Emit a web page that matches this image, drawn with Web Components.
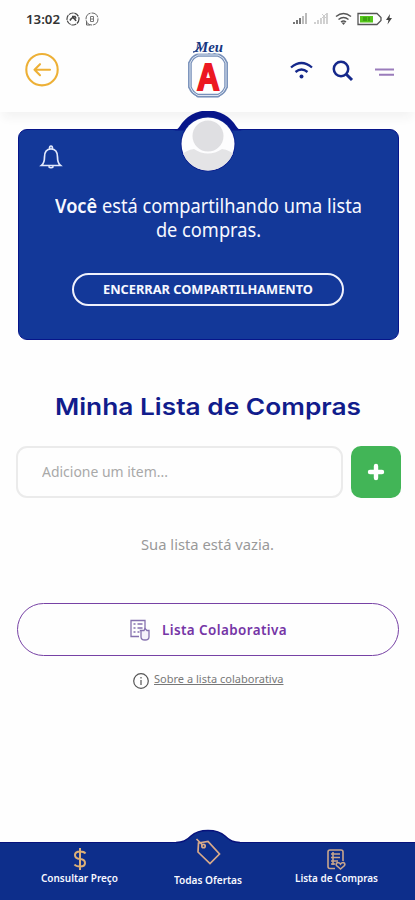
<!DOCTYPE html>
<html lang="pt-BR">
<head>
<meta charset="utf-8">
<title>Minha Lista de Compras</title>
<style>
html,body{margin:0;padding:0;background:#fefefe}
body{font-family:"Noto Sans","Open Sans",sans-serif}
</style>
</head>
<body>
<shopping-app></shopping-app>
<script>
const define = (name, html, ready) => customElements.define(name, class extends HTMLElement {
  connectedCallback() {
    if (this.shadowRoot) return;
    const t = document.createElement('template');
    t.innerHTML = html;
    this.attachShadow({mode: 'open'}).append(t.content.cloneNode(true));
    if (ready) ready(this);
  }
});

// Text condensed or widened to the width in its "w" attribute.
define('fit-text', `<style>
:host{display:block;white-space:nowrap;flex:none}
span{display:inline-block;vertical-align:top;transform-origin:0 50%;text-decoration:var(--line,none);text-underline-offset:1px}
</style><span><slot></slot></span>`, el => {
  const w = +el.getAttribute('w');
  el.style.width = w + 'px';
  const s = el.shadowRoot.querySelector('span');
  const fit = () => { s.style.transform = 'none'; s.style.transform = `scaleX(${w / s.getBoundingClientRect().width})`; };
  fit();
  document.fonts.ready.then(fit);
});

define('status-bar', `<style>
:host{display:flex;height:38px;box-sizing:border-box;padding:0 20px 0 26px;align-items:center;color:#333}
fit-text{font:600 12.5px/20px "Noto Sans",sans-serif;margin-top:1px}
.l{margin-left:6px}.r{margin-left:auto}
</style>
<fit-text w="34">13:02</fit-text>
<svg class="l" width="34" height="16" viewBox="0 0 34 16" fill="none" stroke="#444">
<circle cx="7" cy="8" r="6" stroke-width="1.2" stroke-dasharray="5 .8"/><path d="M4 9.500q2-3.500 3.500-2.500t2.500 3M6 5.500h3l1 2" stroke-width="1.600"/>
<circle cx="26" cy="8" r="6" stroke="#666" stroke-dasharray="8 1"/><path d="M20.500 10.500v3.500H24" stroke="#666"/><path d="M24.500 5.500h3v5h-3zM24.500 8h3" stroke="#777"/></svg>
<svg class="r" width="104" height="16" viewBox="0 0 104 16" fill="none">
<path d="M3 13v-2M6 13V9M9 13V7" stroke="#777" stroke-width="2"/><path d="M12 13V5M15 13V2" stroke="#bbb" stroke-width="2"/>
<path d="M24 13v-2M27 13V9M30 13V7M33 13V6M36 13V2" stroke="#ccc" stroke-width="1.800"/><path d="m31 3 4 4m0-4-4 4" stroke="#ccc"/>
<path d="M45 5.500q7.500-6 15 0M47.500 8.500q5-4 10 0M50 11q2.500-2 5 0" stroke="#555" stroke-width="1.500"/><path d="m52.500 14 2-2.500h-4z" fill="#555"/>
<path d="M67 2.500h19l4 4v3l-4 4H67z" stroke="#555" stroke-width="1.300"/>
<rect x="69" y="5" width="13" height="6.500" fill="#55c51b"/><path d="M73 6v4m2-4v4m3-4v4" stroke="#27820b"/>
<path d="m99 3-4 6h2.500l-1 4.500 4.500-6.500h-2.500z" fill="#444"/></svg>`);

define('brand-logo', `<style>:host{display:block;width:46px;height:62px}svg{display:block}
.m{font:italic 700 15px "Liberation Serif",serif}.a{font:700 37px "Liberation Sans",sans-serif}</style>
<svg width="46" height="62" viewBox="0 0 46 62">
<path d="M13 17h20q2 5 8 8v24q-6 3-8 8.500H13q-2-5.500-8-8.500V25q6-3 8-8z" fill="none" stroke="#8fa6c8" stroke-width="4" stroke-linejoin="round"/>
<path d="M13 17h20q6 2 8 8v24q-2 6-8 8.500H13q-6-2.500-8-8.500V25q2-6 8-8z" fill="#fefefe" stroke="#7890b9" stroke-width="3.500" stroke-linejoin="round"/>
<path d="M13 17h20q6 2 8 8v24q-2 6-8 8.500H13q-6-2.500-8-8.500V25q2-6 8-8z" fill="none" stroke="#dce5f1" stroke-width="1"/>
<text class="a" x="12" y="51.500" textLength="22.500" lengthAdjust="spacingAndGlyphs" fill="#ec1821" stroke="#ec1821" stroke-width="2">A</text>
<text class="m" x="10" y="14" textLength="28" lengthAdjust="spacingAndGlyphs" fill="#173782" stroke="#fefefe" stroke-width="3" paint-order="stroke">Meu</text>
<path d="M8 14q3 0 6-5" fill="none" stroke="#173782" stroke-width="1.300"/>
</svg>`);

define('app-header', `<style>
:host{display:grid;grid-template-columns:1fr 46px 1fr;height:74px;padding:0 20px 0 25px;background:#fefefe;box-shadow:0 9px 9px -3px #f3f3f3}
.back{margin-top:14px}.right{display:flex;align-items:center;margin:0 0 9px 0;justify-content:flex-end}
brand-logo{margin-left:-2.500px}
svg{display:block}
</style>
<svg class="back" width="34" height="36" viewBox="0 0 34 36" fill="none" stroke="#edb036" stroke-width="2.100" stroke-linecap="round" stroke-linejoin="round"><circle cx="17" cy="17.700" r="15.700"/><path d="M25 17.700H9.500m5.500-5.500-5.500 5.500 5.500 5.500"/></svg>
<brand-logo></brand-logo>
<div class="right"><svg width="106" height="24" viewBox="0 0 106 24" fill="none" stroke="#15288b" stroke-width="2.300">
<path d="M2 8.500Q12.500-.500 23 8.500M6.500 13Q12.500 8 18.500 13"/><circle cx="12.500" cy="17.500" r="2" fill="#15288b" stroke="none"/>
<circle cx="52" cy="10" r="7.200" stroke-width="2.500"/><path d="m57.500 15.500 5.500 5.500" stroke-width="3"/>
<path d="M86 10.500h19M90 15.800h15" stroke="#9a7cbb" stroke-width="2.100"/></svg></div>`);

define('share-card', `<style>
:host{display:block;position:relative;box-sizing:border-box;margin:17px 16.500px 0 17.500px;height:210.500px;border-radius:9px;background:#133899;border:1.500px solid #07158a;color:#f7f8ff}
.avatar{position:absolute;left:149px;top:-19px}
.bell{position:absolute;left:20px;top:14px}
.copy{display:flex;justify-content:center;padding:64px 0 0 .500px;font:400 19.500px/24px "Noto Sans",sans-serif;text-align:center}
b{font-weight:600}
.end{display:flex;align-items:center;justify-content:center;box-sizing:border-box;width:272px;height:33px;margin:30.500px 0 0 53px;border:2px solid #eff1fc;border-radius:17px;font:700 13px/24px "Noto Sans",sans-serif}
.end fit-text{margin-top:-1px}
svg{display:block}
</style>
<svg class="avatar" width="80" height="62" viewBox="0 0 80 62"><defs><clipPath id="c"><circle cx="40" cy="33" r="26.500"/></clipPath></defs>
<path d="M5 19.500Q9 19.500 12 15A33 33 0 0 1 68 15Q71 19.500 75 19.500z" fill="#07158a"/><circle cx="40" cy="33" r="27.500" fill="#0c218e"/><g clip-path="url(#c)"><rect width="80" height="62" fill="#fdfdfe"/><circle cx="40" cy="25" r="15.500" fill="#dfdfe2"/><path d="M12 62V46q5-7 14-8 14 9 28 0 9 1 14 8v16z" fill="#e4e4e6"/></g></svg>
<svg class="bell" width="24" height="27" viewBox="0 0 24 27" fill="none" stroke="#e3e9fc" stroke-width="1.700"><path d="M2.500 21.500Q5.500 19 5.500 13q0-8 6.500-8t6.500 8q0 6 3 8.500zM10.500 4.500Q10.500 2 12 2t1.500 2.500M9.500 22.500q2.500 2.500 5 0"/></svg>
<div class="copy"><fit-text w="307"><b>Você</b> está compartilhando uma lista<br>de compras.</fit-text></div>
<div class="end"><fit-text w="210">ENCERRAR COMPARTILHAMENTO</fit-text></div>`);

define('item-form', `<style>
:host{display:flex;gap:8px;margin:23.500px 14px 0 15.500px;height:52px}
.field{flex:1;box-sizing:border-box;border:2px solid #ebebeb;border-radius:11px;padding:11.500px 0 0 24.500px;font:400 15px/24px "Noto Sans",sans-serif;color:#a9a9a9}
.add{width:50px;border-radius:10px;background:#42b557;display:grid;place-items:center}
</style><div class="field"><fit-text w="126">Adicione um item...</fit-text></div>
<div class="add"><svg width="18" height="18" viewBox="0 0 18 18"><path d="M9 3v12M3 9h12" stroke="#fff" stroke-width="4.400" stroke-linecap="round"/></svg></div>`);

define('collab-button', `<style>
:host{display:flex;align-items:center;box-sizing:border-box;height:53px;margin:47px 16px 0 17px;border:1.800px solid #7742a5;border-radius:27px;padding-left:111px;color:#7535a6;font:600 13.500px/24px "Noto Sans",sans-serif;letter-spacing:.400px}
fit-text{margin-left:11px}
</style><svg width="22" height="22" viewBox="0 0 22 22" fill="none" stroke="#8570ae" stroke-width="1.300"><path d="M10 17.500H2V1.500h14v9"/><path d="M4.500 5h2m2 0h5M4.500 9h2m2 0h5M4.500 13h2m2 0h2" stroke-width="1.500"/><path d="M12 12.500v5.500q0 3 4 3t4-3v-6.500h-2l-2-2-1 2h-3.500z" fill="#f6f1fb"/></svg>
<fit-text w="125">Lista Colaborativa</fit-text>`);

define('about-link', `<style>
:host{display:flex;margin:14.500px 0 0 133px;height:20px;align-items:center;color:#777;font:400 11.500px/20px "Noto Sans",sans-serif}
fit-text{margin-left:5px;--line:underline;margin-top:-3px}
</style><svg width="16" height="18" viewBox="0 0 16 18" fill="none" stroke="#555"><circle cx="8" cy="9" r="7.300" stroke-width="1.200"/><path d="M8 8v5M8 5v1.600" stroke="#777" stroke-width="1.500"/></svg><fit-text w="129.500">Sobre a lista colaborativa</fit-text>`);

define('nav-item', `<style>
:host{display:flex;flex-direction:column;align-items:center;color:#f7f8ff;font:600 10.500px/14px "Noto Sans",sans-serif}
</style><slot name="icon"></slot><slot></slot>`);

define('bottom-nav', `<style>
:host{display:grid;grid-template-columns:159px 98px 158px;position:relative;height:58.500px;background:#0d2e8b;border-top:1.500px solid #07127c;box-sizing:border-box}
.bump{position:absolute;left:176px;top:-14px}
nav-item{padding-top:4px;position:relative}
nav-item.mid{padding-top:0;margin-top:-5.500px}
svg{display:block}
</style>
<svg class="bump" width="64" height="18" viewBox="0 0 64 18"><path d="M0 13.500Q9 13.500 15 7 21 1.500 32 1.500T49 7Q55 13.500 64 13.500v4.500H0z" fill="#0d2e8b"/><path d="M0 13.500Q9 13.500 15 7 21 1.500 32 1.500T49 7Q55 13.500 64 13.500" fill="none" stroke="#07127c" stroke-width="1.500"/></svg>
<nav-item><svg slot="icon" width="16" height="24" viewBox="0 0 16 24" fill="none" stroke="#deb176" stroke-width="2"><path d="M8 1v22M13.500 6.500Q12 4.500 8 4.500 3 4.500 3 8t5 4 5 4-5 3.500q-4 0-5.500-2"/></svg><fit-text w="77">Consultar Preço</fit-text></nav-item>
<nav-item class="mid"><svg slot="icon" width="28" height="36" viewBox="0 0 28 36" fill="none" stroke="#d9aa89" stroke-width="1.700"><path d="m4.500 6 9.500-1.500L25.500 17l-9.500 9.500L4 15zM2.500 2l6 6"/><circle cx="9.500" cy="9" r="1.700"/></svg><fit-text w="68">Todas Ofertas</fit-text></nav-item>
<nav-item><svg slot="icon" width="20" height="24" viewBox="0 0 20 24" fill="none" stroke="#c7a58c" stroke-width="1.600"><path d="M9 21.500H4q-2 0-2-2V5q0-2 2-2h11q2 0 2 2v9"/><path d="M5 7h9M5 10.500h9M5 14h7M5 17h4M7 5v13"/><path d="m14.500 22-4-3.500q-1-2 1-3 2 0 3 1.500 1-1.500 3-1.500 2 1 1 3z" fill="#0d2e8b"/></svg><fit-text w="83">Lista de Compras</fit-text></nav-item>`);

define('shopping-app', `<style>
:host{display:flex;flex-direction:column;width:415px;height:900px;overflow:hidden;background:#fefefe}
:host>*{flex:none}
h1{margin:52.500px 0 0 55px;color:#111c8c;font:600 23.500px/30px Inter,sans-serif}
.empty{margin:34.500px 0 0 141px;color:#999;font:400 15px/24px "Noto Sans",sans-serif}
bottom-nav{margin-top:auto}
</style>
<status-bar></status-bar><app-header></app-header><share-card></share-card>
<h1><fit-text w="306">Minha Lista de Compras</fit-text></h1>
<item-form></item-form><div class="empty"><fit-text w="133">Sua lista está vazia.</fit-text></div>
<collab-button></collab-button><about-link></about-link><bottom-nav></bottom-nav>`);
</script>
</body>
</html>
